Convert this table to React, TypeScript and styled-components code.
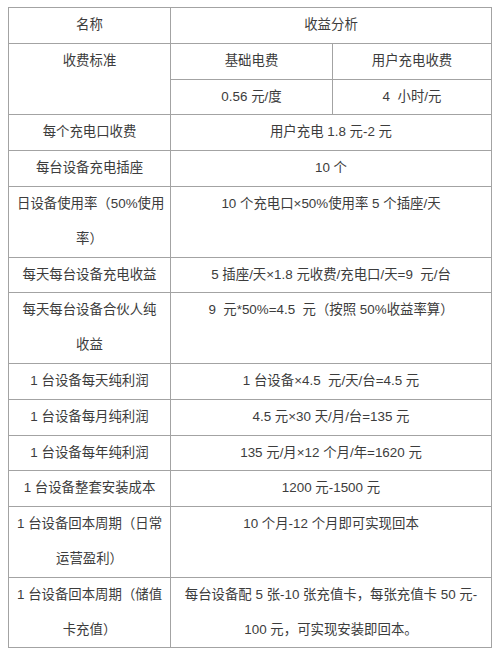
import React from 'react';
import styled, { createGlobalStyle } from 'styled-components';

const GlobalStyle = createGlobalStyle`
  html, body {
    margin: 0;
    padding: 0;
    background: #ffffff;
  }
  body {
    padding: 7px 9px 0 8px;
    font-family: "Liberation Sans", "Noto Sans CJK SC", sans-serif;
  }
`;

const Table = styled.table`
  width: 483px;
  border-collapse: collapse;
  table-layout: fixed;
  color: #3c3c3c;
  font-size: 13.4px;
`;

const Cell = styled.td<{ $align?: 'top' | 'middle' }>`
  border: 1px solid #a3a3a3;
  padding: 0 8px;
  line-height: 34.8px;
  text-align: center;
  vertical-align: ${(p) => p.$align || 'top'};
  white-space: nowrap;
`;

type Row = { label: React.ReactNode; value: React.ReactNode };

const sp = '\u00a0';

const rows: Row[] = [
  { label: '每个充电口收费', value: '用户充电 1.8 元-2 元' },
  { label: '每台设备充电插座', value: '10 个' },
  {
    label: (
      <>
        日设备使用率（50%使用
        <br />
        率）
      </>
    ),
    value: '10 个充电口×50%使用率 5 个插座/天',
  },
  { label: '每天每台设备充电收益', value: `5 插座/天×1.8 元收费/充电口/天=9 ${sp}元/台` },
  {
    label: (
      <>
        每天每台设备合伙人纯
        <br />
        收益
      </>
    ),
    value: `9 ${sp}元*50%=4.5 ${sp}元（按照 50%收益率算）`,
  },
  { label: '1 台设备每天纯利润', value: `1 台设备×4.5 ${sp}元/天/台=4.5 元` },
  { label: '1 台设备每月纯利润', value: '4.5 元×30 天/月/台=135 元' },
  { label: '1 台设备每年纯利润', value: '135 元/月×12 个月/年=1620 元' },
  { label: '1 台设备整套安装成本', value: '1200 元-1500 元' },
  {
    label: (
      <>
        1 台设备回本周期（日常
        <br />
        运营盈利）
      </>
    ),
    value: '10 个月-12 个月即可实现回本',
  },
  {
    label: (
      <>
        1 台设备回本周期（储值
        <br />
        卡充值）
      </>
    ),
    value: (
      <>
        每台设备配 5 张-10 张充值卡，每张充值卡 50 元-
        <br />
        100 元，可实现安装即回本。
      </>
    ),
  },
];

export default function App() {
  return (
    <>
      <GlobalStyle />
      <Table>
        <colgroup>
          <col style={{ width: 162 }} />
          <col style={{ width: 162 }} />
          <col style={{ width: 159 }} />
        </colgroup>
        <tbody>
          <tr>
            <Cell>名称</Cell>
            <Cell colSpan={2}>收益分析</Cell>
          </tr>
          <tr>
            <Cell rowSpan={2}>收费标准</Cell>
            <Cell>基础电费</Cell>
            <Cell>用户充电收费</Cell>
          </tr>
          <tr>
            <Cell>0.56 元/度</Cell>
            <Cell>4 {sp}小时/元</Cell>
          </tr>
          {rows.map((r, i) => (
            <tr key={i}>
              <Cell>{r.label}</Cell>
              <Cell colSpan={2}>{r.value}</Cell>
            </tr>
          ))}
        </tbody>
      </Table>
    </>
  );
}
